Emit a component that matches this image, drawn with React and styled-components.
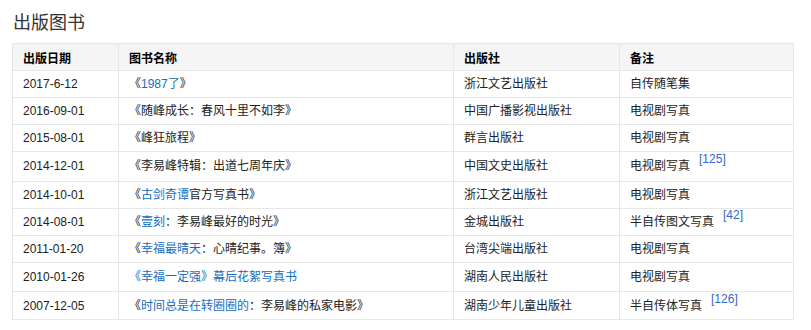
import React from 'react';
import styled, { createGlobalStyle } from 'styled-components';

const GlobalStyle = createGlobalStyle`
  body {
    margin: 0;
    background: #fff;
    font-family: "Liberation Sans", Arial, "Noto Sans CJK SC", sans-serif;
    color: #333;
  }
`;

// book list data: title parts are either plain text or links
const books = [
  { date: '2017-6-12', title: ['《', { link: '1987了' }, '》'], press: '浙江文艺出版社', note: '自传随笔集' },
  { date: '2016-09-01', title: ['《随峰成长：春风十里不如李》'], press: '中国广播影视出版社', note: '电视剧写真' },
  { date: '2015-08-01', title: ['《峰狂旅程》'], press: '群言出版社', note: '电视剧写真' },
  { date: '2014-12-01', title: ['《李易峰特辑：出道七周年庆》'], press: '中国文史出版社', note: '电视剧写真', ref: '125', tall: true },
  { date: '2014-10-01', title: ['《', { link: '古剑奇谭' }, '官方写真书》'], press: '浙江文艺出版社', note: '电视剧写真' },
  { date: '2014-08-01', title: ['《', { link: '壹刻' }, '：李易峰最好的时光》'], press: '金城出版社', note: '半自传图文写真', ref: '42' },
  { date: '2011-01-20', title: ['《', { link: '幸福最晴天' }, '：心晴纪事。簿》'], press: '台湾尖端出版社', note: '电视剧写真' },
  { date: '2010-01-26', title: [{ link: '《幸福一定强》幕后花絮写真书' }], press: '湖南人民出版社', note: '电视剧写真', tall: true },
  { date: '2007-12-05', title: ['《', { link: '时间总是在转圈圈的' }, '：李易峰的私家电影》'], press: '湖南少年儿童出版社', note: '半自传体写真', ref: '126', mid: true },
];

const App = () => (
  <>
    <GlobalStyle />
    <Section>
      <Title>出版图书</Title>
      <Table>
        <colgroup>
          <col style={{ width: 106 }} />
          <col style={{ width: 335 }} />
          <col style={{ width: 166 }} />
          <col style={{ width: 174 }} />
        </colgroup>
        <thead>
          <tr>
            <Th>出版日期</Th>
            <Th>图书名称</Th>
            <Th>出版社</Th>
            <Th>备注</Th>
          </tr>
        </thead>
        <tbody>
          {books.map((b) => (
            <tr key={b.date}>
              <Td $tall={b.tall} $mid={b.mid}>{b.date}</Td>
              <Td $tall={b.tall} $mid={b.mid}>
                {b.title.map((part, i) =>
                  typeof part === 'string' ? part : <Link key={i}>{part.link}</Link>
                )}
              </Td>
              <Td $tall={b.tall} $mid={b.mid}>{b.press}</Td>
              <Td $tall={b.tall} $mid={b.mid}>
                {b.note}
                {b.ref && <Ref>[{b.ref}]</Ref>}
              </Td>
            </tr>
          ))}
        </tbody>
      </Table>
    </Section>
  </>
);

export default App;

// Styled Components
const Section = styled.div`
  padding: 9px 12px 0 12px;
`;

const Title = styled.h2`
  margin: 0 0 10px 1px;
  font-family: "Noto Sans CJK SC", sans-serif;
  font-size: 18px;
  font-weight: 400;
  line-height: 24px;
  color: #333;
`;

const Table = styled.table`
  width: 781px;
  table-layout: fixed;
  border-collapse: collapse;
  font-size: 12px;
`;

const Th = styled.th`
  height: 27px;
  padding: 0 10px;
  border: 1px solid #e6e6e6;
  background: #f5f5f5;
  text-align: left;
  font-weight: 700;
  color: #000;
  box-sizing: border-box;
`;

const Td = styled.td`
  height: ${(p) => (p.$tall ? 29.5 : p.$mid ? 28 : 27)}px;
  padding: 0 10px;
  border: 1px solid #e6e6e6;
  color: #222;
  line-height: 16px;
  white-space: nowrap;
  box-sizing: border-box;
`;

const Link = styled.span`
  color: #136ec2;
`;

const Ref = styled.sup`
  margin-left: 9px;
  font-size: 12px;
  color: #3366cc;
  line-height: 0;
  position: relative;
  top: -2px;
`;
